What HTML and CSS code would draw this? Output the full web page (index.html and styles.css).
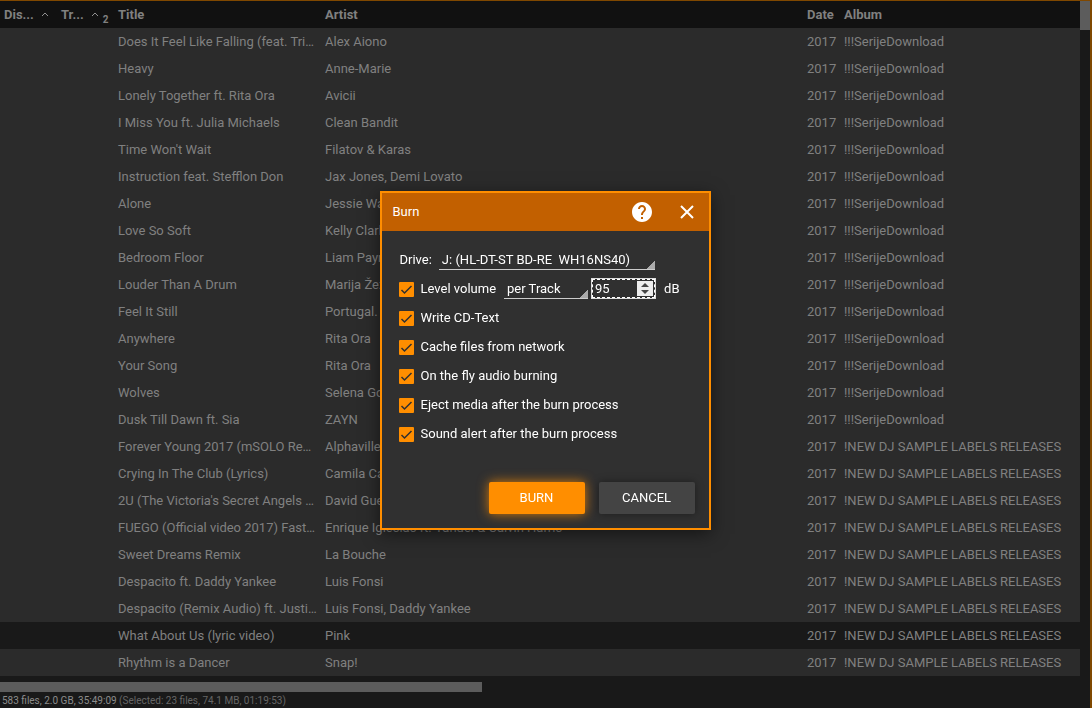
FILE: index.html
```html
<!DOCTYPE html>
<html lang="en">
<head>
<meta charset="utf-8">
<title>Burn</title>
<link rel="stylesheet" href="styles.css">
</head>
<body>
<div class="app">
  <main class="library">
    <div class="list">
      <table class="tracks">
        <colgroup>
          <col class="col-disc"><col class="col-track"><col class="col-title"><col class="col-artist"><col class="col-date"><col>
        </colgroup>
        <thead>
          <tr>
            <th><span class="sort">Dis...<svg class="caret" viewBox="0 0 8 5"><path d="M1 4 4 1 7 4"/></svg></span></th>
            <th><span class="sort">Tr...<svg class="caret" viewBox="0 0 8 5"><path d="M1 4 4 1 7 4"/></svg><span class="order">2</span></span></th>
            <th>Title</th><th>Artist</th><th>Date</th><th>Album</th>
          </tr>
        </thead>
        <tbody id="rows"></tbody>
      </table>
      <div class="vscroll"><div class="vthumb"></div></div>
    </div>
    <div class="hscroll"><div class="hthumb"></div></div>
    <footer class="status"><span class="total">583 files, 2.0 GB, 35:49:09</span> (Selected: 23 files, 74.1 MB, 01:19:53)</footer>
  </main>
</div>
<div class="overlay">
  <form class="dialog" role="dialog" aria-labelledby="heading">
    <header class="titlebar">
      <h1 class="heading" id="heading">Burn</h1>
      <button class="icon-button" type="button" aria-label="Help">
        <svg width="20" height="20" viewBox="2 2 20 20"><path fill="#fff" d="M12 2C6.48 2 2 6.48 2 12s4.480 10 10 10 10-4.480 10-10S17.520 2 12 2zm1 17h-2v-2h2v2zm2.070-7.750-.9.920C13.450 12.900 13 13.500 13 15h-2v-.5c0-1.100.45-2.100 1.170-2.830l1.240-1.260c.37-.36.59-.86.59-1.410 0-1.100-.9-2-2-2s-2 .9-2 2H8c0-2.210 1.790-4 4-4s4 1.790 4 4c0 .88-.36 1.680-.93 2.250z"/></svg>
      </button>
      <button class="icon-button" type="button" aria-label="Close">
        <svg width="14" height="14" viewBox="0 0 14 14"><path d="M1 1 13 13M13 1 1 13" stroke="#fff" stroke-width="2" fill="none"/></svg>
      </button>
    </header>
    <div class="options">
      <div class="option drive">
        <label for="drive">Drive:</label>
        <select class="select" id="drive"><option>J: (HL-DT-ST BD-RE&nbsp; WH16NS40)</option></select>
      </div>
      <div class="option volume">
        <label class="choice"><input class="check" type="checkbox" checked>Level volume</label>
        <select class="select mode" aria-label="Level volume mode"><option>per Track</option></select>
        <span class="spinner">
          <input class="level" id="level" type="number" value="95">
          <svg class="arrows" width="16" height="15" viewBox="0 0 16 15"><path fill="#eee" d="M0 0h16v15H0z"/><path fill="#444" d="M4 6 8 2l4 4zM4 9h8l-4 4z"/></svg>
        </span>
        <label for="level">dB</label>
      </div>
      <label class="option choice"><input class="check" type="checkbox" checked>Write CD-Text</label>
      <label class="option choice"><input class="check" type="checkbox" checked>Cache files from network</label>
      <label class="option choice"><input class="check" type="checkbox" checked>On the fly audio burning</label>
      <label class="option choice"><input class="check" type="checkbox" checked>Eject media after the burn process</label>
      <label class="option choice"><input class="check" type="checkbox" checked>Sound alert after the burn process</label>
    </div>
    <div class="actions">
      <button class="button primary" type="button">BURN</button>
      <button class="button" type="button">CANCEL</button>
    </div>
  </form>
</div>
<script src="rows.js"></script>
</body>
</html>
```

FILE: styles.css
```css
* { box-sizing: border-box; }

body {
  margin: 0;
  background: #191919;
  color: #808080;
  font: 13px/16px Roboto, sans-serif;
}

.app {
  display: flex;
  min-height: 100vh;
  border-top: 1px solid #804800;
  border-right: 2px solid #804800;
}

.library { flex: 1; min-width: 0; }

.list { display: flex; }

.tracks {
  flex: 1;
  width: 100%;
  min-width: 0;
  table-layout: fixed;
  border-collapse: collapse;
  background: #2b2b2b;
}

.col-disc, .col-track { width: 57px; }
.col-title { width: 207px; }
.col-artist { width: 482px; }
.col-date { width: 37px; }

.tracks th, .tracks td {
  height: 27px;
  padding: 0 0 0 4px;
  overflow: hidden;
  text-align: left;
  text-overflow: ellipsis;
  white-space: nowrap;
}

.tracks th { font-weight: 700; background: #111; }
.tracks td:nth-child(3) { padding-right: 4px; }
.tracks .focused { background: #191919; }

.sort { display: flex; align-items: center; }
.caret {
  width: 8px;
  height: 5px;
  margin-left: 7px;
  fill: none;
  stroke: #909090;
}
.order { padding: 11px 0 0 4px; font-size: 10px; line-height: 10px; }

.vscroll { flex: 0 0 10px; background: #191919; }
.vthumb { height: 29px; background: #5c5c5c; }

.hscroll { padding-top: 6px; }
.hthumb { width: 44.2%; height: 10px; background: #5c5c5c; }

.status {
  padding: 1px 2px 0;
  color: #666;
  font-size: 10px;
  line-height: 15px;
}
.total { color: #8c8c8c; }

.overlay {
  position: fixed;
  inset: 0;
  display: flex;
  align-items: center;
  justify-content: center;
  padding: 13px 2px 0 0;
}

.dialog {
  width: 331px;
  border: 2px solid #ff8e00;
  background: #303030;
  color: #fff;
  box-shadow: 0 4px 16px rgba(0, 0, 0, 0.5);
}

.titlebar {
  display: flex;
  align-items: center;
  gap: 13px;
  height: 38px;
  padding: 0 6px 0 11px;
  background: #c26000;
}
.heading { flex: 1; margin: 0; font-size: 13px; font-weight: 400; }
.icon-button {
  display: grid;
  place-items: center;
  width: 32px;
  height: 32px;
  padding: 0;
  border: 0;
  background: none;
}

.options { padding: 14px 17px 0; }
.option { display: flex; align-items: center; height: 29px; }
.drive { gap: 7px; padding-left: 1px; }
.volume { gap: 8px; }

.choice { display: flex; align-items: center; gap: 7px; }

.check {
  appearance: none;
  width: 15px;
  height: 15px;
  margin: 1px 0 0;
  border-radius: 1px;
  background: #ff8e00 url("data:image/svg+xml,%3Csvg xmlns='http://www.w3.org/2000/svg' viewBox='0 0 15 15'%3E%3Cpath d='M2.500 8 5.500 11 12.500 4' fill='none' stroke='%23303030' stroke-width='1.500'/%3E%3C/svg%3E");
}

.select {
  appearance: none;
  width: 216px;
  height: 21px;
  padding: 2px 3px 0;
  border: 0;
  border-bottom: 1px solid #ccc;
  border-radius: 0;
  background: linear-gradient(135deg, transparent 50%, #aaa 50%) right bottom / 9px 9px no-repeat;
  color: #fff;
  font: inherit;
}
.mode { width: 84px; }

.spinner {
  display: flex;
  align-items: center;
  width: 65px;
  height: 21px;
  margin-left: -5px;
  padding-right: 2px;
  outline: 1px dashed #fff;
  outline-offset: -2px;
  border: 1px solid #ddd;
  background: #303030;
}
.level {
  appearance: textfield;
  flex: 1;
  min-width: 0;
  padding: 0 3px;
  border: 0;
  outline: 0;
  background: none;
  color: #fff;
  font: inherit;
}
.level::-webkit-inner-spin-button { display: none; }

.actions {
  display: flex;
  justify-content: flex-end;
  gap: 14px;
  padding: 34px 14px 14px;
}
.button {
  width: 96px;
  height: 32px;
  padding: 0;
  border: 0;
  border-radius: 2px;
  background: #444;
  color: #fff;
  font: inherit;
  box-shadow: 0 0 8px rgba(0, 0, 0, 0.4);
}
.primary { background: #ff8e00; box-shadow: 0 0 12px rgba(255, 142, 0, 0.8); }
```

FILE: rows.js
```js
const serije = "!!!SerijeDownload";
const labels = "!NEW DJ SAMPLE LABELS RELEASES";
const tracks = [
  ["Does It Feel Like Falling (feat. Trinidad Cardona)", "Alex Aiono", serije],
  ["Heavy", "Anne-Marie", serije],
  ["Lonely Together ft. Rita Ora", "Avicii", serije],
  ["I Miss You ft. Julia Michaels", "Clean Bandit", serije],
  ["Time Won't Wait", "Filatov & Karas", serije],
  ["Instruction feat. Stefflon Don", "Jax Jones, Demi Lovato", serije],
  ["Alone", "Jessie Ware", serije],
  ["Love So Soft", "Kelly Clarkson", serije],
  ["Bedroom Floor", "Liam Payne", serije],
  ["Louder Than A Drum", "Marija Žeželj", serije],
  ["Feel It Still", "Portugal. The Man", serije],
  ["Anywhere", "Rita Ora", serije],
  ["Your Song", "Rita Ora", serije],
  ["Wolves", "Selena Gomez", serije],
  ["Dusk Till Dawn ft. Sia", "ZAYN", serije],
  ["Forever Young 2017 (mSOLO Remix Edit)", "Alphaville", labels],
  ["Crying In The Club (Lyrics)", "Camila Cabello", labels],
  ["2U (The Victoria's Secret Angels Lip Sync)", "David Guetta", labels],
  ["FUEGO (Official video 2017) Fastlane", "Enrique Iglesias ft. Yandel & Calvin Harris", labels],
  ["Sweet Dreams Remix", "La Bouche", labels],
  ["Despacito ft. Daddy Yankee", "Luis Fonsi", labels],
  ["Despacito (Remix Audio) ft. Justin Bieber", "Luis Fonsi, Daddy Yankee", labels],
  ["What About Us (lyric video)", "Pink", labels],
  ["Rhythm is a Dancer", "Snap!", labels]
];

const body = document.getElementById("rows");
for (const [title, artist, album] of tracks) {
  const row = body.insertRow();
  if (artist === "Pink") row.className = "focused";
  for (const text of ["", "", title, artist, "2017", album]) {
    row.insertCell().textContent = text;
  }
}
```
